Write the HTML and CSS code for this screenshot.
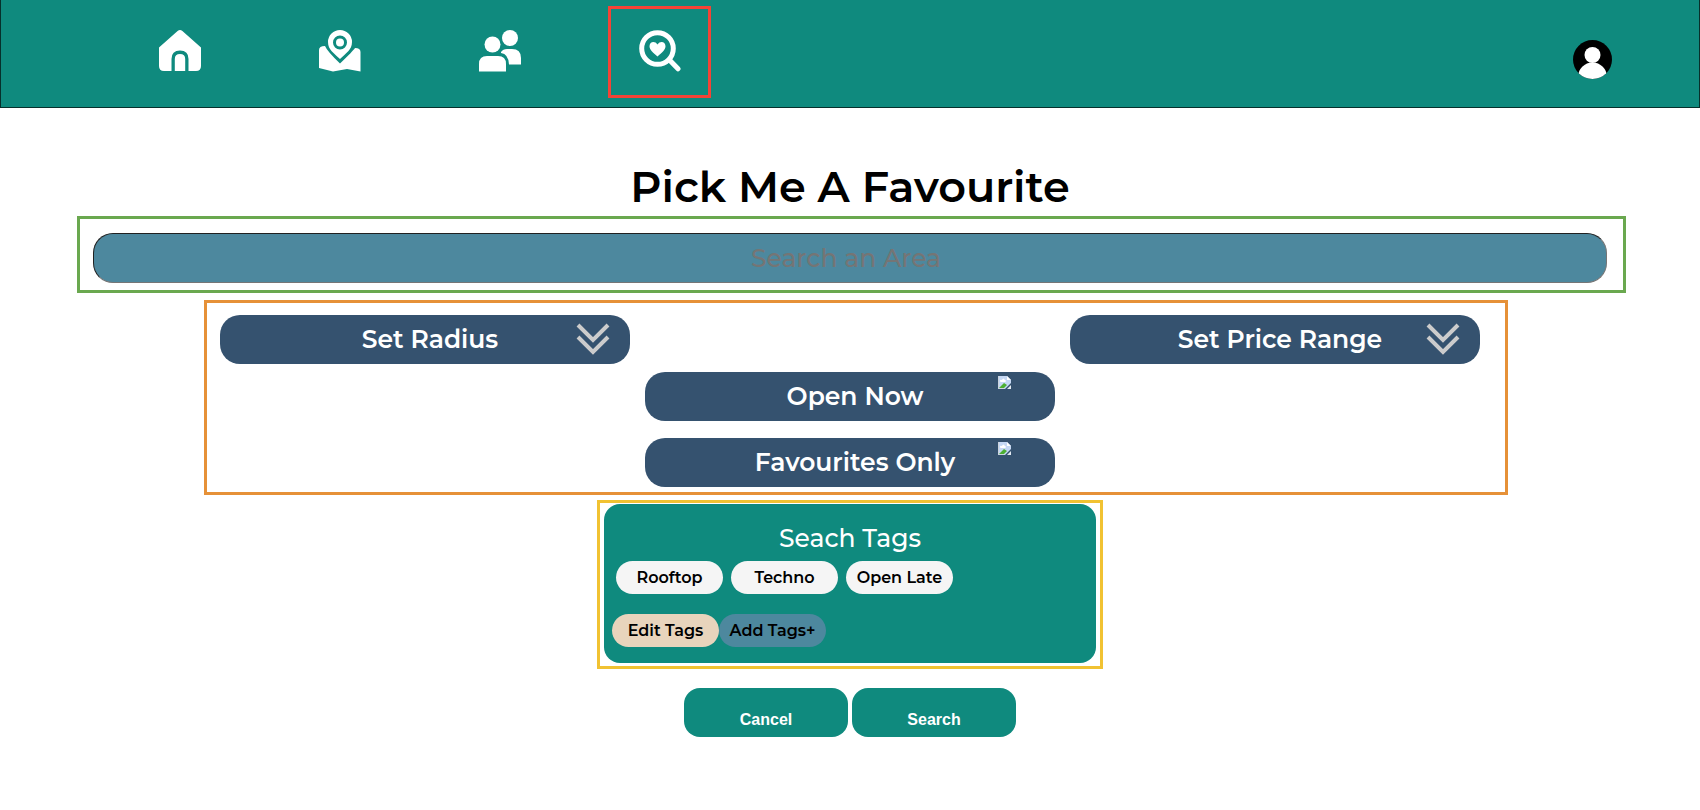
FILE: index.html
```html
<!DOCTYPE html>
<html lang="en">
<head>
<meta charset="utf-8">
<meta name="viewport" content="width=device-width, initial-scale=1">
<title>Pick Me A Favourite</title>
<link rel="stylesheet" href="styles.css">
</head>
<body>
<header class="topbar">
  <nav class="nav" aria-label="Main">
    <a class="nav-link" href="#home" aria-label="Home">
      <svg class="nav-icon" viewBox="0 0 42 42"><path fill="#fff" d="M18.600 1Q21 -1 23.400 1L42 17.500V36Q42 41 37 41H29.500V29Q29.500 20.500 21 20.500T12.500 29V41H5Q0 41 0 36V17.500ZM15.800 41V29Q15.800 24 21 24T26.200 29V41Z"/></svg>
    </a>
    <a class="nav-link" href="#map" aria-label="Map">
      <svg class="nav-icon" viewBox="0 0 42 42"><path fill="#fff" fill-rule="evenodd" d="M21 0A12 12 0 0 1 33 12C33 20 27 23 21 29C15 23 9 20 9 12A12 12 0 0 1 21 0ZM21 5.500A7 7 0 1 0 21 19.500A7 7 0 1 0 21 5.500Z"/><circle cx="21" cy="12.500" r="4" fill="#fff"/><path fill="#fff" d="M6 16Q8 21 21 33.500Q34 21 36 18Q41.500 18 41.500 22V41.500L28 39L14 41.500L0 38V20Q0 16 6 16Z"/></svg>
    </a>
    <a class="nav-link" href="#friends" aria-label="Friends">
      <svg class="nav-icon" viewBox="0 0 42 42" fill="#fff"><circle cx="31" cy="8" r="8"/><circle cx="13.500" cy="14.500" r="8"/><path d="M0 41.500V34Q0 26 8 26H19Q27 26 27 34V41.500ZM22 22Q24 19 28 19H33Q42 19 42 28V34.500H30Q29.500 24 22 23Z"/></svg>
    </a>
    <a class="nav-link nav-link-active" href="#search" aria-label="Find a favourite" aria-current="page">
      <svg class="nav-icon" viewBox="0 0 42 42"><circle cx="18.500" cy="18.500" r="15.800" fill="none" stroke="#fff" stroke-width="5"/><path d="M30.500 30L39 38.800" stroke="#fff" stroke-width="5" stroke-linecap="round"/><path fill="#fff" d="M18.500 26.500C14 22.500 10.500 20 10.500 16.300C10.500 11.500 16 10.500 18.500 14.500C21 10.500 26.500 11.500 26.500 16.300C26.500 20 23 22.500 18.500 26.500Z"/></svg>
    </a>
  </nav>
  <a class="profile" href="#profile" aria-label="Profile">
    <svg class="avatar" viewBox="0 0 39 39"><defs><clipPath id="disc"><circle cx="19.500" cy="19.500" r="19.500"/></clipPath></defs><circle cx="19.500" cy="19.500" r="19.500"/><g fill="#fff" clip-path="url(#disc)"><circle cx="19.500" cy="15" r="8"/><ellipse cx="19.500" cy="37" rx="14.500" ry="14.500"/></g></svg>
  </a>
</header>
<main class="page">
  <h1 class="title">Pick Me A Favourite</h1>
  <form class="search-form" action="#">
    <div class="area-box">
      <input class="area-input" type="text" placeholder="Search an Area" aria-label="Search an Area">
    </div>
    <div class="filters">
      <button class="pill" type="button">Set Radius
        <svg class="pill-chevron" viewBox="0 0 34 34"><path d="M2 2L17 17L32 2M2 14L17 29L32 14" fill="none" stroke="#ccc" stroke-width="4"/></svg>
      </button>
      <button class="pill pill-last" type="button">Set Price Range
        <svg class="pill-chevron" viewBox="0 0 34 34"><path d="M2 2L17 17L32 2M2 14L17 29L32 14" fill="none" stroke="#ccc" stroke-width="4"/></svg>
      </button>
      <div class="toggles">
        <button class="pill" type="button">Open Now
          <svg class="pill-image" viewBox="0 0 13 13"><path fill="#c5d8f4" d="M0 0H9L13 4V7L7 13H0Z"/><path fill="#fff" d="M2 5Q2 3 4 4Q5 1 7 4Q9 5 7 6H3Q2 6 2 5ZM9 0V4H13Z"/><path fill="#4caf32" d="M1 12L6 7L9 9L6 12Z"/><path fill="#e2eaf2" d="M13 9V13H9Z"/><path fill="none" stroke="#cbd3dc" d="M0.500 0V12.500H6"/></svg>
        </button>
        <button class="pill" type="button">Favourites Only
          <svg class="pill-image" viewBox="0 0 13 13"><path fill="#c5d8f4" d="M0 0H9L13 4V7L7 13H0Z"/><path fill="#fff" d="M2 5Q2 3 4 4Q5 1 7 4Q9 5 7 6H3Q2 6 2 5ZM9 0V4H13Z"/><path fill="#4caf32" d="M1 12L6 7L9 9L6 12Z"/><path fill="#e2eaf2" d="M13 9V13H9Z"/><path fill="none" stroke="#cbd3dc" d="M0.500 0V12.500H6"/></svg>
        </button>
      </div>
    </div>
    <div class="tags-box">
      <section class="tags">
        <h2 class="tags-title">Seach Tags</h2>
        <div class="tag-list">
          <button class="tag" type="button">Rooftop</button>
          <button class="tag" type="button">Techno</button>
          <button class="tag" type="button">Open Late</button>
        </div>
        <div class="tag-actions">
          <button class="tag tag-edit" type="button">Edit Tags</button>
          <button class="tag tag-add" type="button">Add Tags+</button>
        </div>
      </section>
    </div>
    <div class="actions">
      <button class="action" type="reset">Cancel</button>
      <button class="action" type="submit">Search</button>
    </div>
  </form>
</main>
</body>
</html>
```
FILE: styles.css
```css
* { box-sizing: border-box; }
body {
  margin: 0;
  background: #fff;
  color: #000;
  font-family: Montserrat, Inter, sans-serif;
}
button, input { font: inherit; }
button { cursor: pointer; }

.topbar {
  display: flex;
  justify-content: space-between;
  align-items: flex-start;
  padding: 6px 87px 9px 127px;
  border: 1px solid #06302c;
  border-top: 0;
  background: #0f8a7e;
}
.nav { display: flex; gap: 57px; }
.nav-link {
  display: flex;
  justify-content: center;
  width: 103px;
  height: 92px;
  padding-top: 21px;
  border: 3px solid transparent;
}
.nav-link-active { border-color: #f44336; }
.nav-icon { width: 42px; height: 42px; }
.profile { margin-top: 34px; }
.avatar { display: block; width: 39px; height: 39px; }

.title {
  margin: 0;
  padding: 51px 16px 1px;
  font-size: 43px;
  line-height: 56px;
  font-weight: 600;
  text-align: center;
}
.area-box {
  margin: 0 74px 0 77px;
  padding: 14px 16px 7px 13px;
  border: 3px solid #6aa84f;
}
.area-input {
  display: block;
  width: 100%;
  height: 50px;
  padding: 0 24px 0 16px;
  border: 1px inset #767676;
  border-radius: 20px;
  background: #4d889e;
  color: #000;
  font-size: 25px;
  font-weight: 500;
  text-align: center;
}
.area-input::placeholder { color: #757575; opacity: 1; }

.filters {
  display: grid;
  grid-template-columns: repeat(3, 1fr);
  gap: 8px 15px;
  margin: 7px 192px 0 204px;
  padding: 12px 25px 5px 13px;
  border: 3px solid #e69138;
}
.pill {
  position: relative;
  height: 49px;
  padding: 0 0 2px 10px;
  border: 0;
  border-radius: 20px;
  background: #35526f;
  color: #fff;
  font-size: 25px;
  font-weight: 600;
}
.pill-last { grid-column: 3; }
.toggles {
  grid-column: 2;
  display: flex;
  flex-direction: column;
  gap: 17px;
}
.pill-chevron {
  position: absolute;
  top: 8px;
  right: 20px;
  width: 34px;
  height: 34px;
}
.pill-image {
  position: absolute;
  top: 4px;
  right: 44px;
  width: 13px;
  height: 13px;
}

.tags-box {
  width: 506px;
  max-width: 100%;
  margin: 5px auto 0;
  padding: 1px 4px 3px;
  border: 3px solid #f1c232;
}
.tags {
  padding: 18px 8px 16px;
  border-radius: 16px;
  background: #0f8a7e;
}
.tags-title {
  margin: 0;
  color: #fff;
  font-size: 25px;
  line-height: 32px;
  font-weight: 500;
  text-align: center;
}
.tag-list {
  display: flex;
  gap: 8px;
  padding: 7px 4px 20px;
}
.tag-actions { display: flex; }
.tag {
  width: 107px;
  height: 33px;
  padding: 0;
  border: 0;
  border-radius: 17px;
  background: #f5f5f5;
  color: #000;
  font-size: 16px;
  font-weight: 600;
}
.tag-edit { background: #e8d4bc; }
.tag-add { background: #4d889e; }

.actions {
  display: flex;
  justify-content: center;
  gap: 4px;
  padding: 19px 0 24px;
}
.action {
  width: 164px;
  height: 49px;
  padding: 14px 0 0;
  border: 0;
  border-radius: 16px;
  background: #0f8a7e;
  color: #fff;
  font-family: "Liberation Sans", Arial, sans-serif;
  font-size: 16px;
  font-weight: 700;
}
```
